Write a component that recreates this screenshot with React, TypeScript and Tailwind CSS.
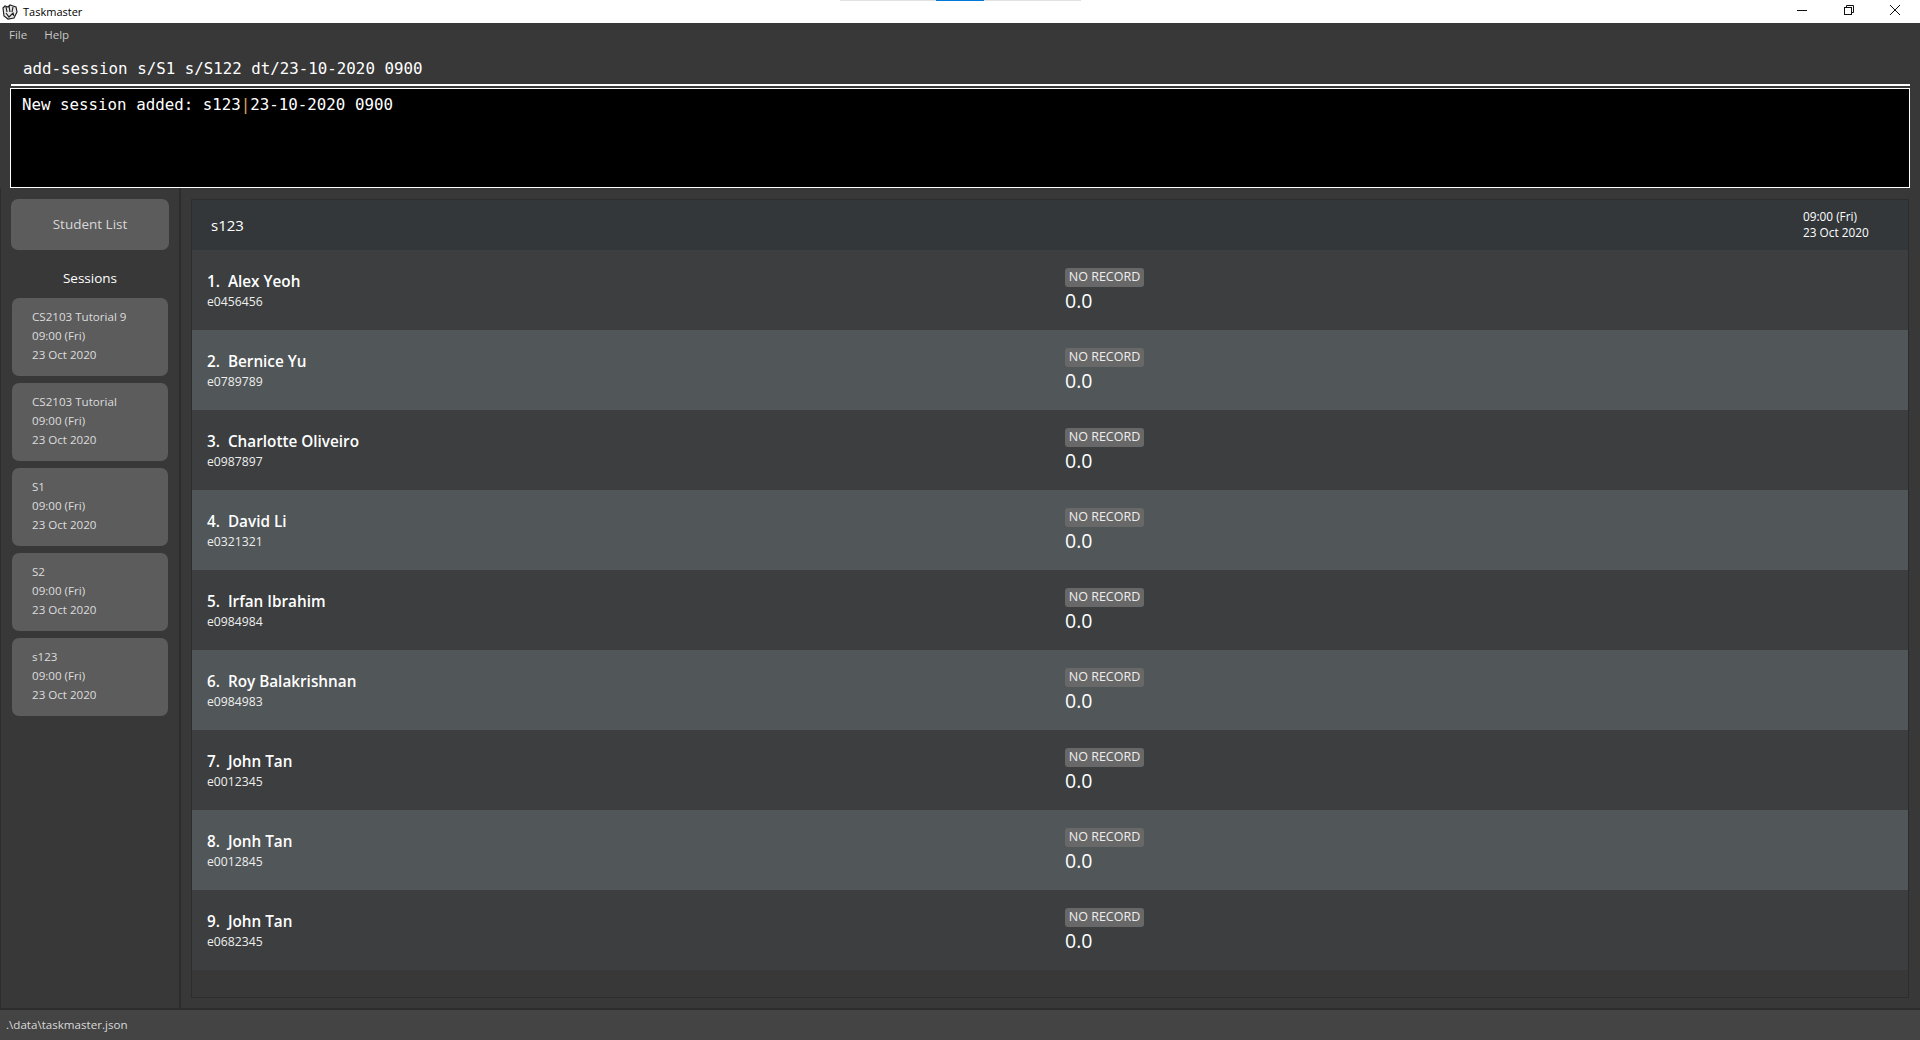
import React from 'react';

const SANS = 'font-["Open_Sans","Noto_Sans",sans-serif]';

const sessions = [
  { name: 'CS2103 Tutorial 9' },
  { name: 'CS2103 Tutorial' },
  { name: 'S1' },
  { name: 'S2' },
  { name: 's123' }
];

const students = [
  { name: 'Alex Yeoh', id: 'e0456456' },
  { name: 'Bernice Yu', id: 'e0789789' },
  { name: 'Charlotte Oliveiro', id: 'e0987897' },
  { name: 'David Li', id: 'e0321321' },
  { name: 'Irfan Ibrahim', id: 'e0984984' },
  { name: 'Roy Balakrishnan', id: 'e0984983' },
  { name: 'John Tan', id: 'e0012345' },
  { name: 'Jonh Tan', id: 'e0012845' },
  { name: 'John Tan', id: 'e0682345' }
];

function TitleBar() {
  return (
    <div className="relative flex h-[23px] shrink-0 items-center bg-white">
      {/* sliver of a window peeking at the top edge */}
      <div className="absolute left-[840px] top-0 flex h-px w-[241px]">
        <div className="w-[96px] bg-[#e2e2e2]" />
        <div className="w-[48px] bg-[#0078d7]" />
        <div className="flex-1 bg-[#e2e2e2]" />
      </div>
      <svg className="ml-[2px] h-[16px] w-[16px]" viewBox="0 0 16 16" fill="none" stroke="#222" strokeWidth="1.2">
        <path d="M1 4 L3 2 L6 3 L8 1 L11 2 L14 3 L15 8 L12 14 L6 15 L2 12 Z" fill="#e8e8e8" />
        <path d="M4 3 L5 8 M7 2 L8 8 M11 3 L10 8 M4 9 L7 13 L11 9 L12 12" />
      </svg>
      <span className="ml-[5px] text-[11px] leading-none text-black">Taskmaster</span>
      <div className="ml-auto flex h-full items-center pb-[3px]">
        <svg className="mr-[35px] h-[12px] w-[12px]" viewBox="0 0 12 12" stroke="#111" fill="none">
          <path d="M1 6.5 H11" />
        </svg>
        <svg className="mr-[34px] h-[12px] w-[12px]" viewBox="0 0 12 12" stroke="#111" fill="none">
          <rect x="1.5" y="3.5" width="7" height="7" />
          <path d="M3.5 3.5 V1.5 H10.5 V8.5 H8.5" />
        </svg>
        <svg className="mr-[19px] h-[12px] w-[12px]" viewBox="0 0 12 12" stroke="#111" fill="none">
          <path d="M1 1 L11 11 M11 1 L1 11" />
        </svg>
      </div>
    </div>
  );
}

function SessionCard({ name }: { name: string }) {
  return (
    <div className="mx-[1px] flex h-[78px] flex-col justify-center rounded-[7px] bg-[#5c5c5c] pb-[3px] pl-[20px] text-[11.6px] leading-[19px] text-[#dcdcdc]">
      <span>{name}</span>
      <span>09:00 (Fri)</span>
      <span>23 Oct 2020</span>
    </div>
  );
}

function StudentRow({ index, name, id }: { index: number; name: string; id: string }) {
  return (
    <div className={`flex h-[80px] shrink-0 ${index % 2 === 0 ? 'bg-[#3c3e3f]' : 'bg-[#515658]'}`}>
      <div className="w-[873px] pl-[15px] pt-[19px]">
        <div className="text-[15.3px] font-semibold leading-[24px] text-white">
          {index + 1}.&nbsp; {name}
        </div>
        <div className="mt-[1px] text-[12.2px] leading-[16px] text-[#eeeeee]">{id}</div>
      </div>
      <div className="pt-[18px]">
        <div className="flex h-[19px] w-[79px] items-center justify-center rounded-[3px] bg-[#686868] text-[12.5px] leading-none text-[#eeeeee]">
          NO RECORD
        </div>
        <div className="text-[19.5px] leading-[27px] text-white">0.0</div>
      </div>
    </div>
  );
}

export default function App() {
  return (
    <div className={`flex h-[1040px] w-[1920px] flex-col overflow-hidden bg-[#383838] ${SANS}`}>
      <TitleBar />

      {/* Menu bar */}
      <div className="flex h-[23px] shrink-0 items-center gap-[17px] pl-[9px] text-[11.5px] text-[#c8c8c8]">
        <span>File</span>
        <span>Help</span>
      </div>

      {/* Command box */}
      <div className="ml-[11px] mr-[10px] flex h-[40px] shrink-0 items-center border-b-2 border-white pl-[12px] pt-[8px] text-[15.8px] text-white font-['DejaVu_Sans_Mono',monospace]">
        add-session s/S1 s/S122 dt/23-10-2020 0900
      </div>

      {/* Result display */}
      <div className="mx-[10px] mt-[2px] h-[100px] shrink-0 border border-white bg-black pl-[11px] pt-[4px] text-[15.8px] leading-[24px] text-white font-['DejaVu_Sans_Mono',monospace]">
        New session added: s123<span className="text-[#e0a060]">|</span>23-10-2020 0900
      </div>

      <div className="flex min-h-0 flex-1 border-l border-[#2d2d2d]">
        {/* Sidebar */}
        <div className="flex w-[180px] shrink-0 flex-col border-r-2 border-[#2d2d2d] pl-[10px] pr-[10px] pt-[11px]">
          <div className="flex h-[51px] items-center justify-center rounded-[7px] bg-[#5c5c5c] text-[13.5px] text-[#d8d8d8]">
            Student List
          </div>
          <div className="mb-[10px] mt-[18px] text-center text-[13.5px] leading-[20px] text-white">Sessions</div>
          <div className="flex flex-col gap-[7px]">
            {sessions.map((s) => (
              <SessionCard key={s.name} name={s.name} />
            ))}
          </div>
        </div>

        {/* Main panel */}
        <div className="flex min-w-0 flex-1 flex-col pb-[10px] pl-[10px] pr-[11px] pt-[11px]">
          <div className="flex flex-1 flex-col border border-[#2d2d2d]">
            <div className="flex h-[50px] shrink-0 items-center justify-between bg-[#33373a] pl-[19px] pr-[38px]">
              <span className="text-[15px] font-medium text-white">s123</span>
              <div className="w-[67px] pb-[2px] text-[11.8px] leading-[16.5px] text-white">
                <div>09:00 (Fri)</div>
                <div className="whitespace-nowrap">23 Oct 2020</div>
              </div>
            </div>
            {students.map((s, i) => (
              <StudentRow key={s.id} index={i} name={s.name} id={s.id} />
            ))}
          </div>
        </div>
      </div>

      {/* Status bar */}
      <div className="flex h-[32px] shrink-0 items-center border-t-2 border-[#2d2d2d] bg-[#444444] pl-[6px] text-[11.6px] text-[#d8d8d8]">
        .\data\taskmaster.json
      </div>
    </div>
  );
}
